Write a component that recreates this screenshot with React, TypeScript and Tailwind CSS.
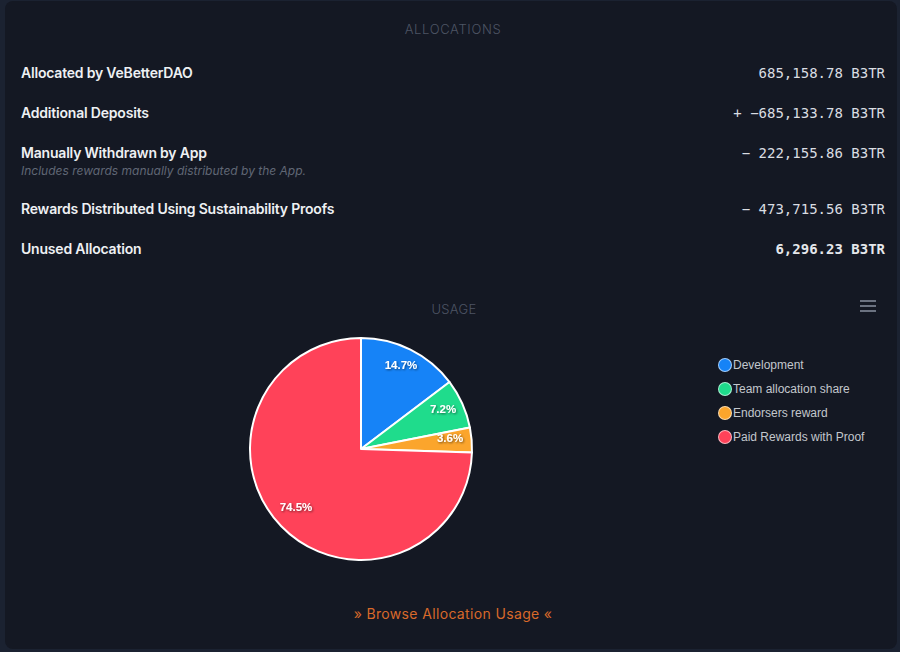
import React from 'react';

const rows = [
  { label: 'Allocated by VeBetterDAO', value: '685,158.78 B3TR' },
  { label: 'Additional Deposits', value: '+ −685,133.78 B3TR' },
  {
    label: 'Manually Withdrawn by App',
    value: '− 222,155.86 B3TR',
    note: 'Includes rewards manually distributed by the App.',
  },
  { label: 'Rewards Distributed Using Sustainability Proofs', value: '− 473,715.56 B3TR' },
  { label: 'Unused Allocation', value: '6,296.23 B3TR', strong: true },
];

const slices = [
  { name: 'Development', pct: 14.7, color: '#1683f7', lx: 40, ly: -84 },
  { name: 'Team allocation share', pct: 7.2, color: '#1fdc8c', lx: 82, ly: -40 },
  { name: 'Endorsers reward', pct: 3.6, color: '#fba52c', lx: 89, ly: -11 },
  { name: 'Paid Rewards with Proof', pct: 74.5, color: '#ff4259', lx: -65, ly: 58 },
];

const C = 113;
const R = 111;

function point(frac: number) {
  const a = frac * Math.PI * 2;
  return [C + R * Math.sin(a), C - R * Math.cos(a)];
}

function PieChart() {
  let acc = 0;
  return (
    <svg width="226" height="226" viewBox="0 0 226 226" className="block">
      <defs>
        <filter id="lblShadow" x="-20%" y="-20%" width="140%" height="140%">
          <feDropShadow dx="1" dy="1" stdDeviation="1" floodColor="#000" floodOpacity="0.55" />
        </filter>
      </defs>
      {slices.map((s) => {
        const start = acc / 100;
        acc += s.pct;
        const end = acc / 100;
        const [x1, y1] = point(start);
        const [x2, y2] = point(end);
        const large = end - start > 0.5 ? 1 : 0;
        return (
          <path
            key={s.name}
            d={`M${C} ${C} L${x1} ${y1} A${R} ${R} 0 ${large} 1 ${x2} ${y2} Z`}
            fill={s.color}
            stroke="#fff"
            strokeWidth="2"
            strokeLinejoin="round"
          />
        );
      })}
      {slices.map((s) => (
        <text
          key={s.name + '-l'}
          x={C + s.lx}
          y={C + s.ly + 4}
          textAnchor="middle"
          fill="#fff"
          fontSize="11.5"
          fontWeight="700"
          fontFamily="'Liberation Sans', Arial, sans-serif"
          filter="url(#lblShadow)"
        >
          {s.pct}%
        </text>
      ))}
    </svg>
  );
}

export default function App() {
  return (
    <div className="min-h-[652px] bg-[#1b2231] pl-[5px] pr-[3px] pt-px pb-[5px]">
      <div className="rounded-lg bg-[#141823] pt-[19px] pb-[25px] font-['Inter',sans-serif]">
        <div className="pl-1 text-center text-[13px] leading-[18px] tracking-wider font-light text-[#4d5463]">
          ALLOCATIONS
        </div>

        <div className="mt-[25px] flex flex-col gap-5 pl-4 pr-3">
          {rows.map((r) => (
            <div key={r.label} className="flex items-start justify-between">
              <div>
                <div className="text-[14px] leading-5 font-semibold tracking-[-0.2px] text-[#eef0f3]">
                  {r.label}
                </div>
                {r.note && (
                  <div className="text-[12px] leading-4 italic text-[#606775]">{r.note}</div>
                )}
              </div>
              <div
                className={`font-['DejaVu_Sans_Mono',monospace] text-[14px] leading-5 whitespace-pre ${
                  r.strong ? 'font-bold text-[#e5e7eb]' : 'font-normal text-[#dadde2]'
                }`}
              >
                {r.value}
              </div>
            </div>
          ))}
        </div>

        <div className="relative mt-[41px]">
          <div className="pl-[6px] text-center text-[13px] leading-[18px] tracking-wide font-light text-[#4d5463]">
            USAGE
          </div>
          <div className="absolute right-[21px] top-[-1px] flex w-4 flex-col gap-[3px] py-[1px]">
            <span className="block h-[2px] bg-[#6b7280]" />
            <span className="block h-[2px] bg-[#6b7280]" />
            <span className="block h-[2px] bg-[#6b7280]" />
          </div>

          <div className="mt-[18px] flex items-start">
            <div className="ml-[243px]">
              <PieChart />
            </div>
            <div className="ml-[244px] mt-[17px] flex flex-col font-['Liberation_Sans',Arial,sans-serif]">
              {slices.map((s) => (
                <div key={s.name} className="flex h-6 items-center gap-px">
                  <span
                    className="block h-[14px] w-[14px] rounded-full border border-white/60"
                    style={{ backgroundColor: s.color }}
                  />
                  <span className="text-[12px] text-[#c3c7cd]">{s.name}</span>
                </div>
              ))}
            </div>
          </div>
        </div>

        <div className="mt-[42px] pl-1 text-center text-[14px] leading-5 tracking-wide text-[#d8692a]">
          » Browse Allocation Usage «
        </div>
      </div>
    </div>
  );
}
